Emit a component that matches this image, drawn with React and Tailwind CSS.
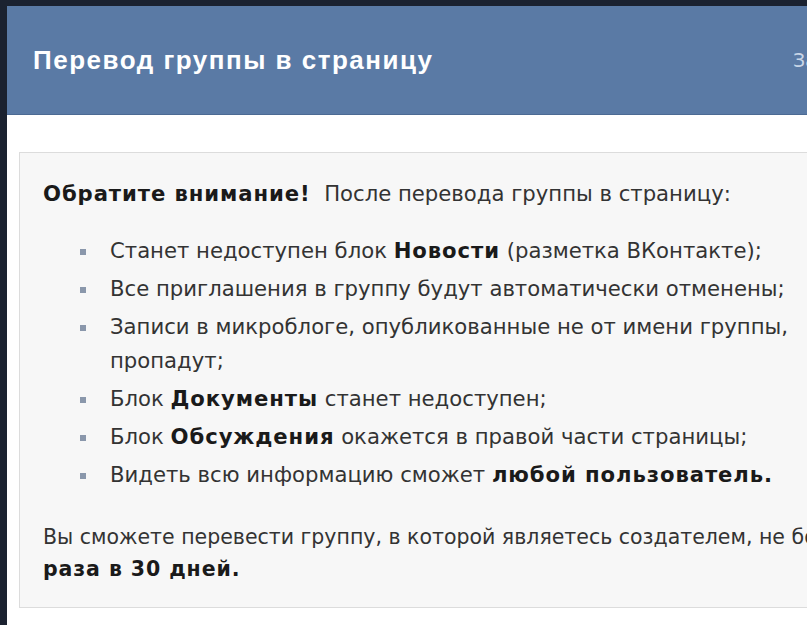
const B = ({ children }) => <b className="tracking-[0.9px] text-[#1a1a1a]">{children}</b>

const items = [
  <>Станет недоступен блок <B>Новости</B> (разметка ВКонтакте);</>,
  <>Все приглашения в группу будут автоматически отменены;</>,
  <>Записи в микроблоге, опубликованные не от имени группы,<br />пропадут;</>,
  <>Блок <B>Документы</B> станет недоступен;</>,
  <>Блок <B>Обсуждения</B> окажется в правой части страницы;</>,
  <>Видеть всю информацию сможет <B>любой пользователь.</B></>,
]

export default function App() {
  return (
    <div className="h-[625px] w-[807px] overflow-hidden bg-[#1b2230] pt-[6px] pl-[7px]">
      <div className="h-full w-[900px] bg-white">
        {/* header */}
        <div className="flex h-[109px] items-center border-b border-[#4c6a93] bg-[#5a7aa5] pl-[26px]">
          <h1 className="w-[760px] shrink-0 font-['Liberation_Sans',sans-serif] text-[26px] font-bold tracking-[1.5px] text-white">
            Перевод группы в страницу
          </h1>
          <span className="font-['DejaVu_Sans',sans-serif] text-[19px] text-[#c9d6e7]">Закрыть</span>
        </div>

        {/* body */}
        <div className="pt-[37px] pl-[12px]">
          <div className="h-[456px] border border-[#dcdcdc] bg-[#f7f7f7] pt-[24px] pl-[23px] font-['DejaVu_Sans',sans-serif] text-[21.2px] leading-[34px] text-[#333]">
            <p className="whitespace-nowrap">
              <B>Обратите внимание!</B>&nbsp; После перевода группы в страницу:
            </p>
            <ul className="mt-[23px] flex flex-col gap-[4px] pl-[37px]">
              {items.map((item, i) => (
                <li key={i} className="flex whitespace-nowrap">
                  <span className="mt-[15px] mr-[24px] h-[6px] w-[6px] shrink-0 bg-[#8a97ab]" />
                  <span>{item}</span>
                </li>
              ))}
            </ul>
            <p className="mt-[29px] whitespace-nowrap text-[20.5px] leading-[32px]">
              Вы сможете перевести группу, в которой являетесь создателем, не более одного
              <br />
              <B>раза в 30 дней.</B>
            </p>
          </div>
        </div>
      </div>
    </div>
  )
}
